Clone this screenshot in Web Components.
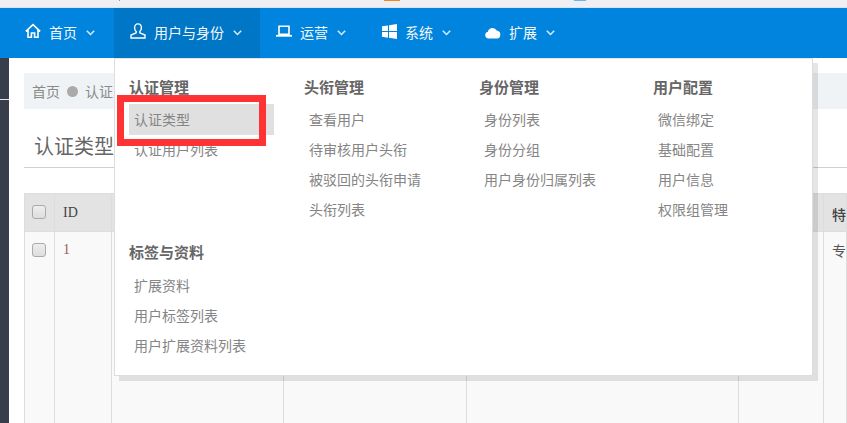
<!DOCTYPE html>
<html lang="zh"><head><meta charset="utf-8">
<style>
html,body{margin:0;padding:0;height:423px;overflow:hidden;background:#fff;font-family:"Noto Sans CJK SC","Noto Sans",sans-serif}
</style></head><body>
<admin-app>
  <top-nav slot="nav"></top-nav>
  <mega-menu slot="menu"></mega-menu>
</admin-app>
<script>
function el(name, css, html){
  customElements.define(name, class extends HTMLElement{
    constructor(){super();const r=this.attachShadow({mode:'open'});r.innerHTML='<style>'+css+'</style>'+html;}
  });
}
const ch='<svg class="ch" width="9" height="6" viewBox="0 0 9 6" fill="none" stroke="currentColor" stroke-width="1.5"><path d="M.8 .8l3.700 3.700L8.200 .8"/></svg>';
const icons={
 home:'<svg width="16" height="16" viewBox="0 0 16 16" fill="none" stroke="#fff" stroke-width="1.6"><path d="M.8 8.400L8 1.600l7.200 6.800M3 7v7.200h3.400V10h3.200v4.200H13V7"/></svg>',
 user:'<svg width="16" height="16" viewBox="0 0 16 16" fill="none" stroke="#fff" stroke-width="1.4"><path d="M8 .9C5.700.9 4.600 2.700 4.600 4.900c0 1.600.7 2.900 1.600 3.700v1.300L1 12v3h14v-3l-5.200-2.100V8.600c.9-.8 1.600-2.100 1.600-3.700C11.400 2.700 10.300.9 8 .9z"/></svg>',
 laptop:'<svg width="16" height="16" viewBox="0 0 16 16" fill="none" stroke="#fff" stroke-width="1.6"><path d="M3 3.200h10v8H3z"/><path d="M0 12.800h16" stroke-width="1.800"/></svg>',
 win:'<svg width="15" height="15" viewBox="0 0 15 15" fill="#fff"><path d="M0 2.300l6-.9v5.700H0zM7 1.300l8-1.300v7.100H7zM0 8.100h6v5.600l-6-.9zM7 8.100h8V15l-8-1.300z"/></svg>',
 cloud:'<svg width="16" height="12" viewBox="0 0 16 12" fill="#fff"><path d="M3.800 11.600a3.500 3.500 0 0 1-.9-6.900A4.700 4.700 0 0 1 11.700 3.500a4.100 4.100 0 0 1 .3 8.100z"/></svg>'
};
el('nav-item',`
:host{display:flex;align-items:center;height:50px;padding:0 0 1px 16px;color:#fff;font-size:14px;box-sizing:border-box;flex:none}
:host([active]){background:#0076c7}
.i{display:flex;width:16px;justify-content:center;margin-right:8px}
.t{margin:-2px 9px 0 0;opacity:.96}
svg{display:block}
.ch{opacity:.85}
`,'<span class="i"><slot name="icon"></slot></span><span class="t"><slot></slot></span>'+ch);
el('top-nav',`
:host{display:flex;height:50px;background:#0084de;padding-left:9px;flex:none}
`,[['home','首页',105],['user','用户与身份',146,1],['laptop','运营',105],['win','系统',104],['cloud','扩展',0]].map(([i,t,w,a])=>
`<nav-item ${a?'active':''} style="${w?'width:'+w+'px':''}"><span slot="icon" style="display:block">${icons[i]}</span>${t}</nav-item>`).join(''));
el('admin-app',`
:host{display:flex;flex-direction:column;width:847px;height:423px;position:relative;overflow:hidden;background:#fff}
.strip{height:8px;box-sizing:border-box;background:#efeef3;border-bottom:1px solid #d9e4ec;position:relative;flex:none}
.strip i{position:absolute;top:0;height:1px}
.body{flex:1;display:flex;min-height:0}
side-bar{flex:none}
page-main{flex:1;min-width:0}
`,`<div class="strip"><i style="left:384px;width:16px;background:#f08a24"></i><i style="left:574px;width:12px;background:#62b5f0"></i><i style="left:119px;width:1px;background:#8a9aa8"></i></div>
<slot name="nav"></slot>
<div class="body"><side-bar></side-bar><page-main></page-main></div>
<slot name="menu"></slot>`);
el('side-bar',`:host{display:block;width:9px;background:#373d4a}
i{display:block;height:1px;background:#e6e6e6;margin-top:41px;width:9px}`,'<i></i>');
el('bread-crumb',`
:host{display:flex;align-items:center;height:36px;background:#f0f3f5;padding-left:8px;color:#8a8a8a;font-size:14px;gap:7px}
b{width:11px;height:11px;border-radius:50%;background:#aaa;display:block}
`,'<span>首页</span><b></b><span>认证</span>');
el('page-main',`
:host{display:block;padding:15px 0 0 15px;box-sizing:border-box}
h1{font:400 20px/22px "Noto Sans CJK SC",sans-serif;color:#666;margin:25px 0 0;padding:1px 0 10px 10px;border-bottom:1px solid #d0d0d0;height:22px}
.t{display:grid;grid-template-columns:30px 57px 172px 183px 272px 85px 1fr;margin-top:25px;height:240px;grid-template-rows:39px 1fr;border-left:1px solid #ddd}
.t>div{border-right:1px solid #ddd;background:#f9f9f9;padding:8px;box-sizing:border-box;font-size:14px;color:#555;white-space:nowrap;overflow:hidden}
.t>div.h{background:#e3e3e3;border-top:1px solid #ddd;border-bottom:1px solid #ddd;color:#444}
.c{display:block;width:12px;height:12px;border:1px solid #aaa;border-radius:3px;background:linear-gradient(#eee,#ddd);margin-left:-1px}
.id{font-family:"Liberation Serif",serif;font-size:15px}
`,`<bread-crumb></bread-crumb><h1>认证类型</h1>
<div class="t">
<div class="h"><span class="c" style="margin-top:3px"></span></div><div class="h id" style="padding-top:11px">ID</div><div class="h"></div><div class="h"></div><div class="h"></div><div class="h"></div><div class="h" style="padding-top:10px;font-weight:500">特征</div>
<div><span class="c" style="margin-top:3px"></span></div><div class="id" style="color:#96604f;padding-top:10px">1</div><div></div><div></div><div></div><div></div><div style="padding-top:8px">专业</div>
</div>`);
el('menu-col',`
:host{display:block;padding-right:30px;--up:2px}
:host([low]){--up:3px}
h4{margin:calc(0px - var(--up)) 0 0;font:700 15px/20px "Noto Sans CJK SC",sans-serif;color:#666;padding-bottom:calc(5px + var(--up))}
`,'<h4><slot name="title"></slot></h4><slot></slot>');
el('menu-link',`
:host{display:block;height:30px;line-height:30px;padding-left:5px;font-size:14px;color:#858585;white-space:nowrap}
:host([on]){background:#e0e0e0;height:31px;margin-bottom:-1px}
`,'<slot></slot>');
const cols=[['认证管理',['认证类型','认证用户列表'],1],['头衔管理',['查看用户','待审核用户头衔','被驳回的头衔申请','头衔列表']],['身份管理',['身份列表','身份分组','用户身份归属列表']],['用户配置',['微信绑定','基础配置','用户信息','权限组管理']],['标签与资料',['扩展资料','用户标签列表','用户扩展资料列表']]];
el('mega-menu',`
:host{position:absolute;left:114px;top:58px;width:699px;height:318px;box-sizing:border-box;background:#fff;border:1px solid #ddd;border-top:1px solid #e4e4e4;box-shadow:5px 5px 0 rgba(0,0,0,.1);z-index:5;display:grid;grid-template-columns:175px 175px 174px 1fr;grid-template-rows:166px 1fr;padding:20px 0 0 14px}
menu-col:last-of-type{grid-column:1/2}
.mark{position:absolute;left:2px;top:36px;width:149px;height:51px;box-sizing:border-box;border:7px solid #f33}
`,cols.map(([t,l,f],n)=>`<menu-col ${n==4?'low':''}><span slot="title">${t}</span>${l.map((x,i)=>`<menu-link ${f&&i==0?'on':''}>${x}</menu-link>`).join('')}</menu-col>`).join('')+'<div class="mark"></div>');
</script>
</body></html>
